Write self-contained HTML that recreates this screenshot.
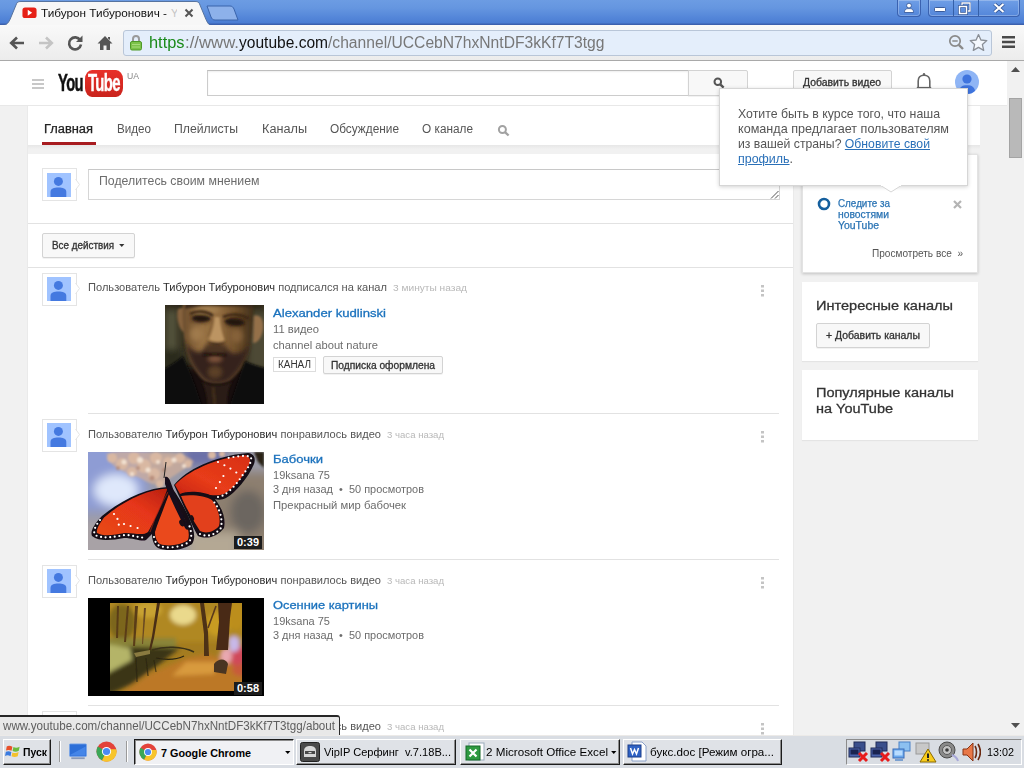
<!DOCTYPE html>
<html lang="ru"><head>
<meta charset="utf-8">
<title>Тибурон Тибуронович - YouTube</title>
<style>
*{box-sizing:border-box;margin:0;padding:0}
html,body{width:1024px;height:768px;overflow:hidden;background:#f1f1f1;font-family:"Liberation Sans",sans-serif;font-size:13px;color:#333}
.abs{position:absolute}
#root{position:relative;width:1024px;height:768px;overflow:hidden}
#root>*{position:absolute}
.t{white-space:nowrap;line-height:16px;height:16px;transform-origin:0 50%;display:block}
.blue{color:#167ac6}
.g5{color:#555}.g7{color:#6c6c6c}.gl{color:#b8b8b8}
b.n{font-weight:normal;color:#2c2c2c}
/* ---------- chrome frame ---------- */
#titlebar{left:0;top:0;width:1024px;height:25px;background:linear-gradient(#6c9ce3 0,#6596e0 8px,#5587d9 17px,#4b7dd3 23px,#3b60ae 24px,#3b60ae 25px)}
#tab{left:2px;top:1px;width:210px;height:25px}
#toolbar{left:0;top:25px;width:1024px;height:36px;background:linear-gradient(#f9f9f9,#ececec);border-bottom:1px solid #a9a9a9}
#urlbar{left:123px;top:30px;width:869px;height:26px;background:#e4eefb;border:1px solid #b9c6d8;border-radius:3px}
.u{font-size:16px;line-height:20px;height:20px;color:#777}
#url .g{color:#1a8a1a}#url .d{color:#111}
.wc{top:0;height:17px;border:1px solid #3a62b0;border-top:0;background:linear-gradient(#6f9ee6,#5486da);border-radius:0 0 4px 4px;box-shadow:inset 0 0 0 1px rgba(255,255,255,.25)}
/* ---------- youtube page ---------- */
#masthead{left:0;top:61px;width:1007px;height:45px;background:#fff;border-bottom:1px solid #e8e8e8}
#main{left:28px;top:106px;width:765px;height:630px;background:#fff;box-shadow:-1px 0 0 #eaeaea,1px 0 0 #eaeaea}
.sidebox{left:802px;width:176px;background:#fff;box-shadow:0 1px 2px rgba(0,0,0,.16)}
.hl{height:1px;background:#e2e2e2}
.btn{background:#f8f8f8;border:1px solid #d3d3d3;border-radius:2px;box-shadow:0 1px 0 rgba(0,0,0,.05)}
.av{width:35px;height:33px;background:#fff;border:1px solid #e4e4e4}
.dots{width:3.5px;height:11.5px;left:760.5px}
.dur{background:#1c1c1c;color:#fff;font-weight:bold;font-size:11px;line-height:12px;height:13px;width:28px;text-align:center;left:234px}
/* scrollbar */
#sb{left:1007px;top:61px;width:17px;height:674px;background:#f1f1f1}
#sbthumb{left:1009px;top:98px;width:13px;height:60px;background:#b9b9b9;border:1px solid #a4a4a4}
/* taskbar */
#taskbar{left:0;top:735px;width:1024px;height:33px;background:#d9dde3;border-top:1px solid #eceae8}
.tb{top:739px;height:26px;background:#dfe2e7;border:1px solid;border-color:#fff #1c1c1c #1c1c1c #fff;box-shadow:inset -1px -1px 0 #8c8c8c;font-size:13px;color:#000;white-space:nowrap;overflow:hidden}
.tb.on{background:#f0f1f4;border-color:#1c1c1c #fff #fff #1c1c1c;box-shadow:inset 1px 1px 0 #8c8c8c;font-weight:bold}
.tk{font-size:10.8px;color:#000;line-height:16px;height:16px}
</style>
</head>
<body>
<div id="root">

<!-- ======= CHROME FRAME ======= -->
<div id="titlebar"></div>
<svg id="tab" viewBox="0 0 210 25"><path d="M0 24.5 C4 24.5 6 22.5 8 18.5 L14 4 C15 1 16 .5 19 .5 L193 .5 C196 .5 197 1 198 4 L204 18.5 C206 22.5 207 24.5 210 24.5" fill="#f7f7f7" stroke="#56739f" stroke-width="1"></path><rect x="1" y="24" width="208" height="1" fill="#f8f8f8"></rect></svg>
<svg style="left:206px;top:5px;width:34px;height:16px" viewBox="0 0 34 16"><path d="M1 1 L24 1 C26 1 27 2 28 4 L32 15 L9 15 C7 15 6 14 5 12 Z" fill="#8db1ea" stroke="#3a64ab" stroke-width="1"></path></svg>
<div id="toolbar"></div>
<div id="urlbar"></div>
<!-- favicon -->
<svg style="left:22px;top:7px;width:15px;height:11.5px" viewBox="0 0 17 13"><rect x=".5" y=".5" width="16" height="12" rx="3" fill="#e62117"></rect><path d="M6.5 3.2 L11.5 6.5 L6.5 9.8Z" fill="#fff"></path></svg>
<div class="t" style="left: 41px; top: 4.6px; font-size: 10.8px; color: rgb(17, 17, 17); transform: scaleX(1.0891);">Тибурон Тибуронович -</div>
<div class="t" style="left:171px;top:4.6px;font-size:10.8px;color:#c4c4c4;width:6px;overflow:hidden">Yo</div>
<svg style="left:184px;top:8px;width:10px;height:10px" viewBox="0 0 10 10"><path d="M1.5 1.5 L8.5 8.5 M8.5 1.5 L1.5 8.5" stroke="#555" stroke-width="2"></path></svg>
<!-- nav buttons -->
<svg style="left:8px;top:33.6px;width:18px;height:18px" viewBox="0 0 18 18"><path d="M16 9 H4 M9 3.5 L3.2 9 L9 14.5" fill="none" stroke="#555" stroke-width="2.6"></path></svg>
<svg style="left:37px;top:33.6px;width:18px;height:18px" viewBox="0 0 18 18"><path d="M2 9 H14 M9 3.5 L14.8 9 L9 14.5" fill="none" stroke="#c4c4c4" stroke-width="2.6"></path></svg>
<svg style="left:66px;top:33.6px;width:18px;height:18px" viewBox="0 0 18 18"><path d="M14.2 6.2 A6 6 0 1 0 15 10.5" fill="none" stroke="#555" stroke-width="2.6"></path><path d="M16.5 1.5 V8 H10 Z" fill="#555"></path></svg>
<svg style="left:96px;top:33.6px;width:18px;height:18px" viewBox="0 0 18 18"><path d="M9 2 L1.5 9.5 H4 V16 H7.5 V11.5 H10.5 V16 H14 V9.5 H16.5 Z M12 3 H14 V6 L12 4.5Z" fill="#555"></path></svg>
<!-- lock -->
<svg style="left:129px;top:34px;width:14px;height:17px" viewBox="0 0 14 17"><path d="M4 8 V5 A3 3 0 0 1 10 5 V8" fill="none" stroke="#9a9a9a" stroke-width="2"></path><rect x="1.5" y="7.5" width="11" height="8.5" rx="1.5" fill="#7cc24a" stroke="#4e9a28"></rect><path d="M3 10.5 H11 M3 13 H11" stroke="#a7dc7c" stroke-width="1"></path></svg>
<div class="t u" style="left: 149px; top: 33px; color: rgb(26, 138, 26); transform: scaleX(1.0234);">https</div><div class="t u" style="left: 184.5px; top: 33px; transform: scaleX(1.0473);">://www.</div><div class="t u" style="left: 238.5px; top: 33px; color: rgb(17, 17, 17); transform: scaleX(0.9715);">youtube.com</div><div class="t u" style="left: 327.5px; top: 33px; transform: scaleX(0.9777);">/channel/UCCebN7hxNntDF3kKf7T3tgg</div>
<!-- zoom, star, menu -->
<svg style="left:948px;top:34px;width:17px;height:17px" viewBox="0 0 17 17"><circle cx="7" cy="7" r="5.2" fill="none" stroke="#8a8a8a" stroke-width="1.7"></circle><path d="M4.3 7 H9.7" stroke="#8a8a8a" stroke-width="1.5"></path><path d="M10.8 10.8 L15 15" stroke="#8a8a8a" stroke-width="2.4"></path></svg>
<svg style="left:969px;top:33px;width:19px;height:19px" viewBox="0 0 19 19"><path d="M9.5 1.6 L11.9 7 L17.8 7.6 L13.4 11.6 L14.7 17.4 L9.5 14.4 L4.3 17.4 L5.6 11.6 L1.2 7.6 L7.1 7 Z" fill="#f4f8fd" stroke="#8a8f96" stroke-width="1.3" stroke-linejoin="round"></path></svg>
<svg style="left:1002px;top:35px;width:14px;height:14px" viewBox="0 0 14 14"><path d="M0 2.2 H13 M0 7 H13 M0 11.8 H13" stroke="#4a4a4a" stroke-width="2.6"></path></svg>
<!-- window controls -->
<div class="wc" style="left:897px;width:24px"></div>
<div class="wc" style="left:928px;width:92px"></div>
<div style="left:953px;top:0;width:1px;height:16px;background:#3560a8"></div>
<div style="left:978px;top:0;width:1px;height:16px;background:#3560a8"></div>
<svg style="left:903px;top:2px;width:12px;height:12px" viewBox="0 0 12 12"><circle cx="6" cy="3.6" r="2.4" fill="#fff" stroke="#2c4f90" stroke-width=".8"></circle><path d="M1.5 10.5 C1.5 7 3.5 6.6 6 6.6 C8.5 6.6 10.5 7 10.5 10.5 Z" fill="#fff" stroke="#2c4f90" stroke-width=".8"></path></svg>
<svg style="left:934px;top:7px;width:13px;height:6px" viewBox="0 0 13 6"><rect x=".5" y=".5" width="11" height="4" rx="1" fill="#fff" stroke="#2c4f90" stroke-width=".9"></rect></svg>
<svg style="left:958px;top:2px;width:13px;height:13px" viewBox="0 0 13 13"><path d="M4 3.5 V1 H12 V9 H9.5" fill="none" stroke="#2c4f90" stroke-width="2.6"></path><path d="M4 3.5 V1 H12 V9 H9.5" fill="none" stroke="#fff" stroke-width="1.3"></path><rect x="1.5" y="4.5" width="7" height="7" fill="none" stroke="#2c4f90" stroke-width="2.8"></rect><rect x="1.5" y="4.5" width="7" height="7" fill="none" stroke="#fff" stroke-width="1.5"></rect></svg>
<svg style="left:993px;top:3px;width:12px;height:10px" viewBox="0 0 12 10"><path d="M1.5 1 L10.5 9 M10.5 1 L1.5 9" stroke="#2c4f90" stroke-width="3.6"></path><path d="M1.5 1 L10.5 9 M10.5 1 L1.5 9" stroke="#fff" stroke-width="2.2"></path></svg>

<!-- ======= PAGE ======= -->
<div id="masthead"></div>
<div id="main"></div>
<!-- hamburger -->
<svg style="left:32px;top:79px;width:12px;height:10px" viewBox="0 0 12 10"><path d="M0 1 H12 M0 5 H12 M0 9 H12" stroke="#c8c8c8" stroke-width="2"></path></svg>
<!-- YouTube logo -->
<div class="t" style="left: 58px; top: 68px; font-size: 24px; line-height: 30px; height: 30px; font-weight: bold; color: rgb(17, 17, 17); letter-spacing: -1px; -webkit-text-stroke: 0.5px rgb(17, 17, 17); transform: scaleX(0.6166);">You</div>
<div style="left:85px;top:70px;width:38px;height:27px;background:linear-gradient(#e8312a,#c9231c);border-radius:7px/9px"></div>
<div class="t" style="left: 88px; top: 68px; font-size: 24px; line-height: 30px; height: 30px; font-weight: bold; color: rgb(255, 255, 255); letter-spacing: -1px; -webkit-text-stroke: 0.4px rgb(255, 255, 255); transform: scaleX(0.6208);">Tube</div>
<div class="t" style="left: 127px; top: 69px; font-size: 9px; line-height: 14px; height: 14px; color: rgb(136, 136, 136); transform: scaleX(0.9588);">UA</div>
<!-- search -->
<div style="left:207px;top:70px;width:482px;height:26px;background:#fff;border:1px solid #ccc;border-top-color:#bdbdbd;box-shadow:inset 0 1px 2px #eee"></div>
<div class="btn" style="left:688px;top:70px;width:60px;height:26px;border-radius:0 2px 2px 0"></div>
<svg style="left:713px;top:77px;width:12px;height:12px" viewBox="0 0 12 12"><circle cx="4.8" cy="4.8" r="3.3" fill="none" stroke="#555" stroke-width="2"></circle><path d="M7.3 7.3 L10.6 10.6" stroke="#555" stroke-width="2.4"></path></svg>
<div class="btn" style="left:793px;top:70px;width:99px;height:26px"></div>
<div class="t" style="left: 803px; top: 75px; font-size: 10px; -webkit-text-stroke: 0.3px rgb(51, 51, 51); color: rgb(51, 51, 51); transform: scaleX(1.0422);">Добавить видео</div>
<!-- bell -->
<svg style="left:915px;top:72px;width:18px;height:19px" viewBox="0 0 18 19"><path d="M3.2 15.5 V9 C3.2 5 5.5 3.2 9 3.2 C12.5 3.2 14.8 5 14.8 9 V15.5" fill="none" stroke="#666" stroke-width="1.6"></path><path d="M1.8 15.8 H16.2" stroke="#666" stroke-width="1.8"></path><circle cx="9" cy="2.3" r="1.2" fill="#666"></circle></svg>
<!-- account avatar -->
<svg style="left:955px;top:70px;width:24px;height:24px" viewBox="0 0 24 24"><defs><clipPath id="cav"><circle cx="12" cy="12" r="12"></circle></clipPath></defs><g clip-path="url(#cav)"><rect width="24" height="24" fill="#8fb5f5"></rect><circle cx="12" cy="9" r="4.6" fill="#3f74de"></circle><path d="M3.5 25 C3.5 17 7 15.3 12 15.3 C17 15.3 20.5 17 20.5 25Z" fill="#3f74de"></path></g></svg>

<!-- tabs -->
<div class="t" style="left: 44px; top: 121px; font-size: 12px; -webkit-text-stroke: 0.25px rgb(34, 34, 34); color: rgb(34, 34, 34); transform: scaleX(1.0725);">Главная</div>
<div style="left:42px;top:142px;width:54px;height:3px;background:#a81c20"></div>
<div class="t g5" style="left: 117px; top: 121px; font-size: 12px; transform: scaleX(0.9697);">Видео</div>
<div class="t g5" style="left: 174px; top: 121px; font-size: 12px; transform: scaleX(1.0184);">Плейлисты</div>
<div class="t g5" style="left: 262px; top: 121px; font-size: 12px; transform: scaleX(1.0565);">Каналы</div>
<div class="t g5" style="left: 330px; top: 121px; font-size: 12px; transform: scaleX(0.9868);">Обсуждение</div>
<div class="t g5" style="left: 422px; top: 121px; font-size: 12px; transform: scaleX(0.9837);">О канале</div>
<svg style="left:497px;top:125px;width:13px;height:12px" viewBox="0 0 13 12"><circle cx="5.4" cy="4.5" r="3.5" fill="none" stroke="#a2a2a2" stroke-width="2"></circle><path d="M8 7.1 L11.6 10.5" stroke="#a2a2a2" stroke-width="2.3"></path></svg>
<div style="left:793px;top:106px;width:187px;height:39px;background:#fff"></div>
<div style="left:28px;top:145px;width:952px;height:9px;background:linear-gradient(#e7e7e7,#f1f1f1 4px,#f1f1f1)"></div>

<!-- comment box -->
<div class="av" style="left:42px;top:168px"></div>
<svg style="left:47px;top:173px;width:24px;height:24px" viewBox="0 0 24 24"><rect width="24" height="24" fill="#a0c3ff"></rect><circle cx="11.4" cy="8.4" r="4.5" fill="#4479e0"></circle><path d="M3.5 24 V19 C3.5 15.5 7 14.6 11.4 14.6 C15.8 14.6 19.3 15.5 19.3 19 V24Z" fill="#4479e0"></path></svg>
<svg style="left:75px;top:179px;width:6px;height:11px" viewBox="0 0 6 11"><path d="M.5 0 L4.5 5.5 L.5 11" fill="#fff" stroke="#e4e4e4"></path></svg>
<div style="left:88px;top:169px;width:692px;height:31px;background:#fff;border:1px solid #d6d6d6;border-top-color:#c8c8c8"></div>
<svg style="left:769px;top:189px;width:10px;height:10px" viewBox="0 0 10 10"><path d="M9.5 2 L2 9.5 M9.5 6 L6 9.5" stroke="#555" stroke-width="1"></path></svg>
<div class="t g7" style="left: 98.5px; top: 173px; font-size: 12.2px; transform: scaleX(1.0088);">Поделитесь своим мнением</div>
<div class="hl" style="left:28px;top:223px;width:765px"></div>
<div class="btn" style="left:42px;top:233px;width:93px;height:25px"></div>
<div class="t" style="left: 52px; top: 238px; font-size: 10px; -webkit-text-stroke: 0.3px rgb(51, 51, 51); color: rgb(51, 51, 51); transform: scaleX(0.9858);">Все действия</div>
<svg style="left:119px;top:243.5px;width:5.5px;height:3px" viewBox="0 0 7 4"><path d="M0 0 H7 L3.5 4Z" fill="#333"></path></svg>
<div class="hl" style="left:28px;top:267px;width:765px"></div>

<!-- ===== feed item 1 ===== -->
<div class="av" style="left:42px;top:273px"></div>
<svg style="left:47px;top:277px;width:24px;height:24px" viewBox="0 0 24 24"><rect width="24" height="24" fill="#a0c3ff"></rect><circle cx="11.4" cy="8.4" r="4.5" fill="#4479e0"></circle><path d="M3.5 24 V19 C3.5 15.5 7 14.6 11.4 14.6 C15.8 14.6 19.3 15.5 19.3 19 V24Z" fill="#4479e0"></path></svg>
<svg style="left:75px;top:283px;width:6px;height:11px" viewBox="0 0 6 11"><path d="M.5 0 L4.5 5.5 L.5 11" fill="#fff" stroke="#e4e4e4"></path></svg>
<div class="t g5" style="left: 88px; top: 279px; font-size: 10.8px; transform: scaleX(1.0271);">Пользователь <b class="n">Тибурон Тибуронович</b> подписался на канал</div>
<div class="t gl" style="left: 393px; top: 279.5px; font-size: 9.5px; transform: scaleX(1.0696);">3 минуты назад</div>
<svg class="dots" style="top:285px" viewBox="0 0 3.5 11.5"><rect width="3.5" height="2.5" fill="#c4c4c4"></rect><rect y="4.5" width="3.5" height="2.5" fill="#c4c4c4"></rect><rect y="9" width="3.5" height="2.5" fill="#c4c4c4"></rect></svg>
<svg style="left:165px;top:305px;width:99px;height:99px" viewBox="0 0 99 99"><defs>
<filter id="b1" x="-20%" y="-20%" width="140%" height="140%"><feGaussianBlur stdDeviation="1.3"></feGaussianBlur></filter>
<filter id="b1s" x="-20%" y="-20%" width="140%" height="140%"><feGaussianBlur stdDeviation="3"></feGaussianBlur></filter>
<filter id="b1m" x="-20%" y="-20%" width="140%" height="140%"><feGaussianBlur stdDeviation="2.2"></feGaussianBlur></filter>
<linearGradient id="sk" x1="0" y1="0" x2="1" y2="0"><stop offset="0" stop-color="#6c4e2e"></stop><stop offset=".28" stop-color="#987244"></stop><stop offset=".55" stop-color="#8e683c"></stop><stop offset=".8" stop-color="#684a28"></stop><stop offset="1" stop-color="#40301c"></stop></linearGradient>
<clipPath id="c1"><rect width="99" height="99"></rect></clipPath></defs>
<g clip-path="url(#c1)">
<rect width="99" height="99" fill="#3a3624"></rect>
<g filter="url(#b1s)"><rect x="84" y="8" width="24" height="56" fill="#4e4a34"></rect><rect x="2" y="6" width="9" height="44" fill="#55553c"></rect><rect x="0" y="-4" width="99" height="7" fill="#2a2416"></rect><rect x="-4" y="44" width="22" height="22" fill="#2c2a1c"></rect><rect x="10" y="62" width="80" height="44" fill="#120e0a"></rect></g>
<g filter="url(#b1)">
<path d="M13 4 C11 10 13 22 18 27 L21 26 L20 2Z" fill="#86623e"></path>
<path d="M89 11 C95 9 99 14 98 24 C97 32 93 38 88 38Z" fill="#94704a"></path>
<path d="M18 -4 C17 14 18 30 21 42 C24 56 30 66 38 74 C44 79 60 79 66 74 C76 66 82 54 85 40 C88 26 89 10 88 -4Z" fill="url(#sk)"></path>
<path d="M20 -2 L88 -2 L88 3 C70 1 40 1 20 4Z" fill="#3a2a1a"></path>
</g>
<g filter="url(#b1m)">
<ellipse cx="42" cy="5" rx="13" ry="4" fill="#a88456" opacity=".7"></ellipse><ellipse cx="36" cy="13.5" rx="10" ry="4.5" fill="#2e1c10" opacity=".8"></ellipse><ellipse cx="70" cy="17" rx="10" ry="4.5" fill="#2a1a0e" opacity=".85"></ellipse>
<ellipse cx="31" cy="29" rx="6" ry="7" fill="#a88252" opacity=".7"></ellipse>
<ellipse cx="72" cy="31" rx="6" ry="7" fill="#8e6a40" opacity=".7"></ellipse>
<path d="M20 34 C22 50 28 64 38 74 C44 80 60 80 66 74 C76 64 82 52 85 38 C80 46 74 50 66 48 C62 42 56 40 50 40 C44 40 40 42 36 47 C28 48 23 42 20 34Z" fill="#34241a"></path>
<path d="M40 40 C46 37 56 37 62 41 C62 46 60 49 50 49 C42 49 39 46 40 40Z" fill="#4e3624"></path>
<ellipse cx="50" cy="67" rx="7" ry="6" fill="#60432a" opacity=".9"></ellipse>
<ellipse cx="50" cy="54" rx="7" ry="2.6" fill="#8a5c40"></ellipse>
</g>
<g filter="url(#b1)">
<path d="M38 50 C44 49 56 49 61 50.5" stroke="#1c100a" stroke-width="1.8" fill="none"></path>
<path d="M27 13 C31 10 41 10 46 14 C41 17 31 17 27 13Z" fill="#22160c"></path>
<path d="M59 16 C64 13 75 14 80 18 C75 21 64 21 59 16Z" fill="#22160c"></path>
<path d="M25 9 C32 5 42 6 48 11" stroke="#3c2816" stroke-width="2.6" fill="none"></path>
<path d="M58 12 C66 8 77 9 84 14" stroke="#3c2816" stroke-width="2.6" fill="none"></path>
<path d="M49.5 12 C49.5 20 47 28 44 34 C47 37.5 56 37.5 59.5 35 C57 28 55 20 54.5 12Z" fill="#bc9462"></path>
<path d="M42 36 C47 39 57 39 61 36 C58 41 45 41 42 36Z" fill="#3e2818"></path>
<path d="M48 12 C47 20 45 27 43 32" stroke="#7a5834" stroke-width="1.4" fill="none" opacity=".8"></path>
<path d="M36 76 C40 82 42 90 43 104 L62 104 C62 90 63 82 68 76 C60 82 44 82 36 76Z" fill="#2c1e12"></path>
<path d="M48 82 L50 100" stroke="#4a3420" stroke-width="2.5" opacity=".7"></path>
</g>
<g filter="url(#b1)"><path d="M-5 66 C6 60 12 56 18 51 C24 64 30 78 38 104 L-5 104Z" fill="#0a0a09"></path><path d="M104 64 C96 62 88 60 80 56 C76 68 70 84 64 104 L104 104Z" fill="#0c0c0b"></path></g>
</g></svg>
<div class="t" style="left: 273px; top: 305px; font-size: 11.5px; color: rgb(27, 114, 189); -webkit-text-stroke: 0.3px rgb(27, 114, 189); transform: scaleX(1.1403);">Alexander kudlinski</div>
<div class="t g7" style="left: 273px; top: 321px; font-size: 10.8px; transform: scaleX(1.0384);">11 видео</div>
<div class="t g7" style="left: 273px; top: 337px; font-size: 10.8px; transform: scaleX(1.035);">channel about nature</div>
<div style="left:273px;top:357px;width:43px;height:15px;background:#fff;border:1px solid #ddd"></div>
<div class="t" style="left: 278px; top: 356.5px; font-size: 10px; color: rgb(51, 51, 51); transform: scaleX(0.9948);">КАНАЛ</div>
<div class="btn" style="left:323px;top:356px;width:120px;height:18px"></div>
<div class="t" style="left: 331px; top: 358px; font-size: 10px; -webkit-text-stroke: 0.3px rgb(51, 51, 51); color: rgb(51, 51, 51); transform: scaleX(1.0238);">Подписка оформлена</div>
<div class="hl" style="left:88px;top:413px;width:691px"></div>

<!-- ===== feed item 2 ===== -->
<div class="av" style="left:42px;top:419px"></div>
<svg style="left:47px;top:423px;width:24px;height:24px" viewBox="0 0 24 24"><rect width="24" height="24" fill="#a0c3ff"></rect><circle cx="11.4" cy="8.4" r="4.5" fill="#4479e0"></circle><path d="M3.5 24 V19 C3.5 15.5 7 14.6 11.4 14.6 C15.8 14.6 19.3 15.5 19.3 19 V24Z" fill="#4479e0"></path></svg>
<svg style="left:75px;top:429px;width:6px;height:11px" viewBox="0 0 6 11"><path d="M.5 0 L4.5 5.5 L.5 11" fill="#fff" stroke="#e4e4e4"></path></svg>
<div class="t g5" style="left: 88px; top: 426px; font-size: 10.8px; transform: scaleX(1.0253);">Пользователю <b class="n">Тибурон Тибуронович</b> понравилось видео</div>
<div class="t gl" style="left: 387px; top: 426.5px; font-size: 9.5px; transform: scaleX(1.01);">3 часа назад</div>
<svg class="dots" style="top:431px" viewBox="0 0 3.5 11.5"><rect width="3.5" height="2.5" fill="#c4c4c4"></rect><rect y="4.5" width="3.5" height="2.5" fill="#c4c4c4"></rect><rect y="9" width="3.5" height="2.5" fill="#c4c4c4"></rect></svg>
<svg style="left:88px;top:452px;width:176px;height:98px" viewBox="0 0 176 98"><defs>
<filter id="b2" x="-20%" y="-20%" width="140%" height="140%"><feGaussianBlur stdDeviation="5"></feGaussianBlur></filter>
<filter id="b2s" x="-20%" y="-20%" width="140%" height="140%"><feGaussianBlur stdDeviation="1.2"></feGaussianBlur></filter>
<filter id="b2t" x="-10%" y="-10%" width="120%" height="120%"><feGaussianBlur stdDeviation=".5"></feGaussianBlur></filter>
<linearGradient id="wl" x1="0" y1="1" x2="1" y2="0"><stop offset="0" stop-color="#e84a18"></stop><stop offset=".6" stop-color="#e6361a"></stop><stop offset="1" stop-color="#b8200e"></stop></linearGradient>
<linearGradient id="wr" x1="0" y1="1" x2="1" y2="0"><stop offset="0" stop-color="#c8240e"></stop><stop offset=".4" stop-color="#e83c1a"></stop><stop offset="1" stop-color="#d83014"></stop></linearGradient>
<clipPath id="c2"><rect width="176" height="98"></rect></clipPath></defs>
<g clip-path="url(#c2)">
<rect width="176" height="98" fill="#9a9aa8"></rect>
<g filter="url(#b2)">
<rect x="-10" y="-10" width="70" height="70" fill="#8e9cd4"></rect>
<ellipse cx="28" cy="38" rx="22" ry="16" fill="#dfe8fb"></ellipse>
<rect x="-10" y="70" width="90" height="40" fill="#a8a2a6"></rect>
<rect x="120" y="20" width="70" height="90" fill="#8d7f70"></rect>
<ellipse cx="160" cy="60" rx="18" ry="22" fill="#6c6660"></ellipse>
<rect x="100" y="80" width="50" height="30" fill="#b4a894"></rect>
<rect x="96" y="-6" width="40" height="20" fill="#6a70a8"></rect>
</g>
<g filter="url(#b2s)">
<path d="M18 2 C30 -2 50 0 70 1 C90 0 102 4 106 10 C96 18 88 22 80 28 C72 36 62 32 52 26 C42 22 30 18 24 12Z" fill="#cfae9a" opacity=".75"></path><g fill="#d9b8a2"><circle cx="24" cy="6" r="5"></circle><circle cx="34" cy="12" r="6"></circle><circle cx="46" cy="6" r="6"></circle><circle cx="56" cy="14" r="7"></circle><circle cx="68" cy="6" r="6"></circle><circle cx="44" cy="20" r="5"></circle><circle cx="66" cy="22" r="6"></circle><circle cx="80" cy="10" r="5"></circle><circle cx="92" cy="6" r="5"></circle><circle cx="100" cy="12" r="4"></circle><circle cx="72" cy="32" r="4"></circle><circle cx="124" cy="3" r="4"></circle><circle cx="134" cy="2" r="3"></circle></g>
<g fill="#f2e2d2"><circle cx="36" cy="10" r="2.5"></circle><circle cx="52" cy="8" r="3"></circle><circle cx="60" cy="18" r="2.5"></circle><circle cx="86" cy="8" r="2.5"></circle><circle cx="96" cy="14" r="2"></circle><circle cx="44" cy="22" r="2"></circle><circle cx="70" cy="10" r="2"></circle></g>
<g fill="#b88e7c"><circle cx="50" cy="16" r="2"></circle><circle cx="64" cy="26" r="2.5"></circle><circle cx="76" cy="18" r="2"></circle><circle cx="30" cy="16" r="2"></circle></g>
<path d="M166 0 L176 0 L176 16 L170 10Z" fill="#2a2018"></path>
</g>
<g filter="url(#b2t)">
<path d="M78 10 L76 26" stroke="#222" stroke-width="1"></path>
<!-- right wing -->
<path d="M86 33 C98 18 126 4 160 1 C166 2 168 6 166 12 C160 26 148 40 138 46 C134 48 130 48 127 47 C134 56 138 66 136 76 C130 84 120 88 110 84 C104 74 96 54 90 42Z" fill="#120c14"></path>
<path d="M87 33 C99 19.5 127 5.8 158 3.2 C162 5 163 9 161 13 C155 25 145 37 136 42 C130 44 126 43 122 43 C116 40 100 38 92 42Z" fill="url(#wr)"></path>
<path d="M93 44 C104 42 118 44 124 48 C130 56 133 66 131 74 C126 80 118 82 112 79 C106 70 98 56 93 44Z" fill="#e2401a"></path>
<!-- left wing -->
<path d="M80 35 C60 36 36 46 14 64 C6 72 2 80 4 84 C12 90 24 88 36 86 C46 86 54 90 58 88 C60 86 62 84 64 82 C64 88 66 94 70 96 C80 100 96 98 104 92 C108 86 106 78 102 68 C98 58 90 44 84 36Z" fill="#120c14"></path>
<path d="M79 36.6 C60 37.8 37 47.8 16 65.4 C11 72 8 78 9 81 C16 85 26 83 37 81 C47 81 55 84 60 80 C66 70 74 52 79 38Z" fill="url(#wl)"></path>
<path d="M81 42 C76 56 70 70 67 80 C67 86 69 90 72 92 C80 95 93 93 100 88 C102 82 100 76 97 68 C93 58 87 48 81 42Z" fill="#ea4a1c"></path>
<path d="M80 40 C72 54 66 68 62 80" stroke="#b82a10" stroke-width="1.2" fill="none" opacity=".6"></path>
<!-- body -->
<path d="M77 25 C79 24 81.5 26 82.5 30 C87 42 95 62 101 77 C99 79 97.5 77 96 74 C89 60 81 44 77 32Z" fill="#16101a"></path>
<ellipse cx="94" cy="71" rx="2.6" ry="3.6" fill="#1a1014" transform="rotate(-25 94 71)"></ellipse>
<ellipse cx="104" cy="66" rx="1.8" ry="3" fill="#1a1014" transform="rotate(-25 104 66)"></ellipse>
</g>
<!-- white dots -->
<g fill="none" stroke="#fff" stroke-linecap="round" stroke-width="2.2">
<path d="M12 68 C7 74 5 80 7 83 C14 87 26 85 37 83 C46 83 54 87 58 85" stroke-dasharray="0 4.6"></path>
<path d="M66 85 C67 90 69 93 72 94 C80 97 94 95 101 90 C105 85 103 78 100 70" stroke-dasharray="0 4.8"></path>
<path d="M112 82 C120 86 128 82 133 76 C135 66 131 56 126 50" stroke-dasharray="0 4.6"></path>
<path d="M130 45 C136 45 146 36 154 24 C160 16 164 10 163 5 C158 3 150 4 140 6" stroke-dasharray="0 4.8"></path>
<path d="M26 62 C30 66 32 72 30 76" stroke-dasharray="0 6"></path>
<path d="M36 72 C42 74 50 76 56 78" stroke-dasharray="0 7"></path>
<path d="M130 10 C138 14 146 18 150 22" stroke-dasharray="0 7"></path>
<path d="M128 36 C132 30 136 24 138 18" stroke-dasharray="0 7"></path>
</g>
</g></svg>
<div class="dur" style="top:536px">0:39</div>
<div class="t" style="left: 273px; top: 451px; font-size: 11.5px; color: rgb(27, 114, 189); -webkit-text-stroke: 0.3px rgb(27, 114, 189); transform: scaleX(1.1331);">Бабочки</div>
<div class="t g7" style="left: 273px; top: 467px; font-size: 10.8px; transform: scaleX(1.0207);">19ksana 75</div>
<div class="t g7" style="left: 273px; top: 481px; font-size: 10.8px; transform: scaleX(1.0125);">3 дня назад &nbsp;•&nbsp; 50 просмотров</div>
<div class="t g7" style="left: 273px; top: 497px; font-size: 10.8px; transform: scaleX(1.0443);">Прекрасный мир бабочек</div>
<div class="hl" style="left:88px;top:559px;width:691px"></div>

<!-- ===== feed item 3 ===== -->
<div class="av" style="left:42px;top:565px"></div>
<svg style="left:47px;top:569px;width:24px;height:24px" viewBox="0 0 24 24"><rect width="24" height="24" fill="#a0c3ff"></rect><circle cx="11.4" cy="8.4" r="4.5" fill="#4479e0"></circle><path d="M3.5 24 V19 C3.5 15.5 7 14.6 11.4 14.6 C15.8 14.6 19.3 15.5 19.3 19 V24Z" fill="#4479e0"></path></svg>
<svg style="left:75px;top:575px;width:6px;height:11px" viewBox="0 0 6 11"><path d="M.5 0 L4.5 5.5 L.5 11" fill="#fff" stroke="#e4e4e4"></path></svg>
<div class="t g5" style="left: 88px; top: 572px; font-size: 10.8px; transform: scaleX(1.0253);">Пользователю <b class="n">Тибурон Тибуронович</b> понравилось видео</div>
<div class="t gl" style="left: 387px; top: 572.5px; font-size: 9.5px; transform: scaleX(1.01);">3 часа назад</div>
<svg class="dots" style="top:577px" viewBox="0 0 3.5 11.5"><rect width="3.5" height="2.5" fill="#c4c4c4"></rect><rect y="4.5" width="3.5" height="2.5" fill="#c4c4c4"></rect><rect y="9" width="3.5" height="2.5" fill="#c4c4c4"></rect></svg>
<svg style="left:88px;top:598px;width:176px;height:98px" viewBox="0 0 176 98"><defs>
<filter id="b3" x="-20%" y="-20%" width="140%" height="140%"><feGaussianBlur stdDeviation="2.2"></feGaussianBlur></filter>
<filter id="b3s" x="-10%" y="-10%" width="120%" height="120%"><feGaussianBlur stdDeviation=".7"></feGaussianBlur></filter>
<clipPath id="c3"><rect x="22" y="5" width="132" height="88"></rect></clipPath></defs>
<rect width="176" height="98" fill="#000"></rect>
<g clip-path="url(#c3)">
<rect x="22" y="5" width="132" height="88" fill="#a47c20"></rect>
<g filter="url(#b3)">
<rect x="18" y="0" width="140" height="44" fill="#b08822"></rect>
<ellipse cx="95" cy="17" rx="13" ry="10" fill="#ead98c"></ellipse>
<ellipse cx="60" cy="12" rx="14" ry="8" fill="#c8a232"></ellipse>
<ellipse cx="130" cy="26" rx="12" ry="12" fill="#c89c24"></ellipse>
<ellipse cx="148" cy="18" rx="9" ry="14" fill="#bc8e1e"></ellipse>
<ellipse cx="34" cy="24" rx="14" ry="18" fill="#7c661a"></ellipse>
<rect x="18" y="40" width="70" height="10" fill="#8a8438"></rect>
<path d="M18 48 L92 50 L74 64 L44 86 L18 98Z" fill="#3a3416"></path>
<path d="M18 46 L42 50 L44 62 L18 76Z" fill="#b4b468"></path>
<path d="M120 56 L132 60 L160 70 L160 98 L30 98 L62 76 L98 60Z" fill="#bc7826"></path>
<path d="M98 64 L130 64 L126 76 L84 78Z" fill="#d89a3c"></path>
<ellipse cx="150" cy="58" rx="8" ry="12" fill="#d04a5a"></ellipse>
<ellipse cx="146" cy="46" rx="6" ry="8" fill="#c8b8e8"></ellipse>
<ellipse cx="138" cy="58" rx="6" ry="8" fill="#e8a8b0"></ellipse>
<ellipse cx="152" cy="72" rx="8" ry="6" fill="#c85a3a"></ellipse>
</g>
<g filter="url(#b3s)">
<path d="M130 5 L144 5 L142 20 L140 52 L128 52 L131 24Z" fill="#4a2c14"></path>
<path d="M112 5 L116 5 L120 34 L121 58 L116 58 L116 36Z" fill="#4e3018"></path>
<path d="M120 30 L128 8" stroke="#5a3a1c" stroke-width="1.6"></path>
<path d="M69 5 L72 5 L66 40 L63 52 L61 52 L64 38Z" fill="#4a2e14"></path>
<path d="M47 8 L50 8 L47 48 L45 48Z" fill="#5a3c18"></path>
<path d="M39 8 L41 8 L38 44 L36 44Z" fill="#5a3c18"></path>
<path d="M29 8 L31 8 L30 40 L28 40Z" fill="#5a3c18"></path>
<path d="M56 10 L58 10 L55 46 L54 46Z" fill="#6a4a20"></path>
<path d="M64 52 C76 48 94 48 106 54" stroke="#3a3018" stroke-width="1.6" fill="none"></path>
<path d="M46 55 L62 52 L62 56 L48 59Z" fill="#8a7a40"></path>
<path d="M68 60 C78 62 88 62 96 58" stroke="#2a2410" stroke-width="1.2" fill="none"></path>
<path d="M48 60 L49 84 M58 60 L60 78 M66 62 L68 74" stroke="#2a2410" stroke-width="1.3" opacity=".7"></path>
<path d="M126 66 C130 60 138 60 140 66 L138 76 L126 74Z" fill="#4a3420"></path>
</g>
</g></svg>
<div class="dur" style="top:682px">0:58</div>
<div class="t" style="left: 273px; top: 597px; font-size: 11.5px; color: rgb(27, 114, 189); -webkit-text-stroke: 0.3px rgb(27, 114, 189); transform: scaleX(1.1178);">Осенние картины</div>
<div class="t g7" style="left: 273px; top: 613px; font-size: 10.8px; transform: scaleX(1.0207);">19ksana 75</div>
<div class="t g7" style="left: 273px; top: 627px; font-size: 10.8px; transform: scaleX(1.0125);">3 дня назад &nbsp;•&nbsp; 50 просмотров</div>
<div class="hl" style="left:88px;top:705px;width:691px"></div>

<!-- ===== feed item 4 (partially hidden) ===== -->
<div class="av" style="left:42px;top:711px"></div>
<svg style="left:47px;top:715px;width:24px;height:24px" viewBox="0 0 24 24"><rect width="24" height="24" fill="#a0c3ff"></rect><circle cx="11.4" cy="8.4" r="4.5" fill="#4479e0"></circle></svg>
<div class="t g5" style="left: 88px; top: 718px; font-size: 10.8px; transform: scaleX(1.0253);">Пользователю <b class="n">Тибурон Тибуронович</b> понравилось видео</div>
<div class="t gl" style="left: 387px; top: 718.5px; font-size: 9.5px; transform: scaleX(1.01);">3 часа назад</div>
<svg class="dots" style="top:723px" viewBox="0 0 3.5 11.5"><rect width="3.5" height="2.5" fill="#c4c4c4"></rect><rect y="4.5" width="3.5" height="2.5" fill="#c4c4c4"></rect><rect y="9" width="3.5" height="2.5" fill="#c4c4c4"></rect></svg>

<!-- ===== sidebar ===== -->
<div class="sidebox" style="top:154px;height:119px;border:1px solid #e3e3e3;box-shadow:0 1px 3px rgba(0,0,0,.2)"></div>
<svg style="left:817px;top:197px;width:14px;height:14px" viewBox="0 0 14 14"><circle cx="7" cy="7" r="5" fill="#fff" stroke="#155f9e" stroke-width="2.6"></circle></svg>
<div class="t" style="left: 838px; top: 196px; font-size: 10px; color: rgb(43, 116, 180); -webkit-text-stroke: 0.25px rgb(43, 116, 180); transform: scaleX(0.9852);">Следите за</div>
<div class="t" style="left: 838px; top: 207px; font-size: 10px; color: rgb(43, 116, 180); -webkit-text-stroke: 0.25px rgb(43, 116, 180); transform: scaleX(1.0342);">новостями</div>
<div class="t" style="left: 838px; top: 218px; font-size: 10px; color: rgb(43, 116, 180); -webkit-text-stroke: 0.25px rgb(43, 116, 180); transform: scaleX(1.0433);">YouTube</div>
<svg style="left:953px;top:200px;width:9px;height:9px" viewBox="0 0 9 9"><path d="M1 1 L8 8 M8 1 L1 8" stroke="#b4b4b4" stroke-width="2.2"></path></svg>
<div class="t g5" style="left: 872px; top: 246px; font-size: 10px; transform: scaleX(1.0071);">Просмотреть все &nbsp;»</div>

<div class="sidebox" style="top:282px;height:79px;box-shadow:0 1px 1px rgba(0,0,0,.05)"></div>
<div class="t" style="left: 816px; top: 297px; font-size: 13.7px; line-height: 18px; height: 18px; color: rgb(51, 51, 51); -webkit-text-stroke: 0.3px rgb(51, 51, 51); transform: scaleX(1.0628);">Интересные каналы</div>
<div class="btn" style="left:816px;top:323px;width:114px;height:25px"></div>
<div class="t" style="left: 826px; top: 328px; font-size: 10px; -webkit-text-stroke: 0.3px rgb(51, 51, 51); color: rgb(51, 51, 51); transform: scaleX(1.0461);">+ Добавить каналы</div>

<div class="sidebox" style="top:370px;height:70px;box-shadow:0 1px 1px rgba(0,0,0,.05)"></div>
<div class="t" style="left: 816px; top: 384px; font-size: 13.7px; line-height: 18px; height: 18px; color: rgb(51, 51, 51); -webkit-text-stroke: 0.3px rgb(51, 51, 51); transform: scaleX(1.0605);">Популярные каналы</div>
<div class="t" style="left: 816px; top: 400px; font-size: 13.7px; line-height: 18px; height: 18px; color: rgb(51, 51, 51); -webkit-text-stroke: 0.3px rgb(51, 51, 51); transform: scaleX(1.0582);">на YouTube</div>

<!-- popup -->
<div style="left:719px;top:88px;width:249px;height:98px;background:#fff;border:1px solid #d6d6d6;box-shadow:0 1px 4px rgba(0,0,0,.18)"></div>
<svg style="left:880px;top:185px;width:22px;height:8px" viewBox="0 0 22 8"><path d="M0 0 L11 7 L22 0" fill="#fff" stroke="#d6d6d6"></path><path d="M1 0 H21" stroke="#fff" stroke-width="2"></path></svg>
<div class="t g5" style="left: 738px; top: 106px; font-size: 12.2px; transform: scaleX(1.0107);">Хотите быть в курсе того, что наша</div>
<div class="t g5" style="left: 738px; top: 121px; font-size: 12.2px; transform: scaleX(1.0335);">команда предлагает пользователям</div>
<div class="t g5" style="left: 738px; top: 136px; font-size: 12.2px; transform: scaleX(1.0029);">из вашей страны? <span style="color:#2a70b8;text-decoration:underline">Обновите свой</span></div>
<div class="t g5" style="left: 738px; top: 151px; font-size: 12.2px; transform: scaleX(1.0215);"><span style="color:#2a70b8;text-decoration:underline">профиль</span>.</div>


<!-- ======= SCROLLBAR ======= -->
<div id="sb"></div>
<div id="sbthumb"></div>
<svg style="left:1011px;top:67px;width:9px;height:5px" viewBox="0 0 9 5"><path d="M0 5 L4.5 0 L9 5Z" fill="#505050"></path></svg>
<svg style="left:1011px;top:723px;width:9px;height:5px" viewBox="0 0 9 5"><path d="M0 0 L4.5 5 L9 0Z" fill="#505050"></path></svg>

<!-- ======= STATUS BUBBLE ======= -->
<div style="left:-2px;top:715px;width:342px;height:21px;background:#e8e8e8;border:1px solid #2a2a2a;border-top:2px solid #262626;border-bottom:0;border-radius:0 3px 0 0"></div>
<div class="t" style="left: 3px; top: 718px; font-size: 12px; color: rgb(94, 94, 94); transform: scaleX(0.9684);">www.youtube.com/channel/UCCebN7hxNntDF3kKf7T3tgg/about</div>

<!-- ======= TASKBAR ======= -->
<div id="taskbar"></div>
<div class="tb" style="left:3px;width:48px"></div>
<svg style="left:5px;top:743px;width:15.5px;height:15.5px" viewBox="-1 0 18 17"><path d="M1 3.5 C3 2.3 5 2.5 7.6 3.8 L6.6 8.6 C4.4 7.4 2.4 7.2 0.2 8.2Z" fill="#e8502a"></path><path d="M8.8 4.2 C11 5.2 13.4 5.2 16 3.8 L15 8.6 C12.6 9.9 10.2 9.8 7.8 8.8Z" fill="#6dbb3c"></path><path d="M0 9.6 C2.2 8.6 4.2 8.8 6.4 10 L5.4 14.8 C3.2 13.6 1.2 13.5 -1 14.6Z" fill="#3a7be0"></path><path d="M7.6 10.4 C10 11.4 12.4 11.3 14.8 10 L13.8 14.8 C11.4 16 9 16 6.6 15Z" fill="#f4c12c"></path></svg>
<div class="t tk" style="left: 23px; top: 744px; font-weight: bold; transform: scaleX(0.9636);">Пуск</div>
<div style="left:59px;top:741px;width:2px;height:21px;border-left:1px solid #9a9a9a;border-right:1px solid #fff"></div>
<svg style="left:68px;top:743px;width:20px;height:17px" viewBox="0 0 21 19"><rect x="1" y="1" width="19" height="14" rx="1" fill="#2d6fd8" stroke="#7aa6e8"></rect><path d="M2 13 L19 4 V14 H2Z" fill="#4f8ff0" opacity=".7"></path><rect x="3" y="16" width="15" height="2" fill="#8a9ab8"></rect></svg>
<svg style="left:96px;top:741px;width:21px;height:21px" viewBox="0 0 21 21"><circle cx="10.5" cy="10.5" r="10" fill="#e3423a"></circle><path d="M10.5 10.5 L1.8 5.5 A10 10 0 0 0 6 19.4Z" fill="#3aa757"></path><path d="M10.5 10.5 L6 19.4 A10 10 0 0 0 20.3 8.2 L10.5 8.2Z" fill="#f7c52b"></path><circle cx="10.5" cy="10.5" r="4.6" fill="#fff"></circle><circle cx="10.5" cy="10.5" r="3.6" fill="#4a8af4"></circle></svg>
<div style="left:126px;top:741px;width:2px;height:21px;border-left:1px solid #9a9a9a;border-right:1px solid #fff"></div>
<div class="tb on" style="left:134px;width:160px"></div>
<svg style="left:139px;top:743px;width:18px;height:18px" viewBox="0 0 21 21"><circle cx="10.5" cy="10.5" r="10" fill="#e3423a"></circle><path d="M10.5 10.5 L1.8 5.5 A10 10 0 0 0 6 19.4Z" fill="#3aa757"></path><path d="M10.5 10.5 L6 19.4 A10 10 0 0 0 20.3 8.2 L10.5 8.2Z" fill="#f7c52b"></path><circle cx="10.5" cy="10.5" r="4.6" fill="#fff"></circle><circle cx="10.5" cy="10.5" r="3.6" fill="#4a8af4"></circle></svg>
<div class="t tk" style="left: 161px; top: 745px; font-weight: bold; transform: scaleX(1);">7 Google Chrome</div>
<svg style="left:285px;top:751px;width:5.5px;height:3px" viewBox="0 0 7 4"><path d="M0 0 H7 L3.5 4Z" fill="#000"></path></svg>
<div class="tb" style="left:296px;width:160px"></div>
<svg style="left:300px;top:742px;width:20px;height:20px" viewBox="0 0 20 20"><rect x=".5" y=".5" width="19" height="19" rx="2" fill="#4a4a4a" stroke="#222"></rect><path d="M4 15 V9 C4 5 7 4 10 4 C13 4 16 5 16 9 V15Z" fill="#d8d8d8"></path><rect x="5" y="9" width="10" height="3" fill="#4a4a4a"></rect><rect x="8.5" y="10" width="3" height="1.2" fill="#d8d8d8"></rect></svg>
<div class="t tk" style="left: 324px; top: 744px; transform: scaleX(1.0254);">VipIP Серфинг &nbsp;v.7.18B...</div>
<div class="tb" style="left:460px;width:160px"></div>
<svg style="left:465px;top:742px;width:20px;height:20px" viewBox="0 0 20 20"><rect x="4" y="1" width="15" height="17" fill="#fff" stroke="#9ab"></rect><rect x="1" y="4" width="14" height="14" fill="#2f9a41" stroke="#17692a"></rect><path d="M4.5 7.5 L11.5 14.5 M11.5 7.5 L4.5 14.5" stroke="#fff" stroke-width="2.2"></path></svg>
<div class="t tk" style="left: 486px; top: 744px; transform: scaleX(1.0776);">2 Microsoft Office Excel</div>
<svg style="left:611px;top:751px;width:5.5px;height:3px" viewBox="0 0 7 4"><path d="M0 0 H7 L3.5 4Z" fill="#000"></path></svg>
<div class="tb" style="left:623px;width:159px"></div>
<svg style="left:627px;top:741px;width:20px;height:21px" viewBox="0 0 20 21"><path d="M5 1 H15 L19 5 V20 H5Z" fill="#fff" stroke="#8aa0c8"></path><rect x="1" y="4" width="13" height="12" fill="#2f62c4" stroke="#1c3f8a"></rect><path d="M3.5 7 L5.5 13 L7.5 8.5 L9.5 13 L11.5 7" fill="none" stroke="#fff" stroke-width="1.5"></path></svg>
<div class="t tk" style="left: 650px; top: 744px; transform: scaleX(1.0761);">букс.doc [Режим огра...</div>
<!-- tray -->
<div style="left:846px;top:739px;width:176px;height:26px;border:1px solid;border-color:#8c8c8c #fff #fff #8c8c8c"></div>
<svg style="left:848px;top:741px;width:21px;height:22px" viewBox="0 0 21 22"><rect x="6" y="1" width="11" height="9" fill="#3a4f8c" stroke="#202c58"></rect><rect x="1" y="7" width="11" height="9" fill="#4a63ac" stroke="#202c58"></rect><rect x="2.5" y="8.5" width="8" height="5" fill="#1a2450"></rect><path d="M11 12 L19 20 M19 12 L11 20" stroke="#e81c1c" stroke-width="3"></path></svg>
<svg style="left:870px;top:741px;width:21px;height:22px" viewBox="0 0 21 22"><rect x="6" y="1" width="11" height="9" fill="#3a4f8c" stroke="#202c58"></rect><rect x="1" y="7" width="11" height="9" fill="#4a63ac" stroke="#202c58"></rect><rect x="2.5" y="8.5" width="8" height="5" fill="#1a2450"></rect><path d="M11 12 L19 20 M19 12 L11 20" stroke="#e81c1c" stroke-width="3"></path></svg>
<svg style="left:892px;top:741px;width:20px;height:22px" viewBox="0 0 20 22"><rect x="7" y="1" width="11" height="9" fill="#8cc0f0" stroke="#4a82c8"></rect><rect x="1" y="8" width="11" height="9" fill="#6aa8ec" stroke="#3a6cb8"></rect><rect x="2.5" y="9.5" width="8" height="5" fill="#b8dcff"></rect><rect x="3" y="18" width="8" height="2" fill="#7aa0d0"></rect></svg>
<svg style="left:915px;top:741px;width:22px;height:22px" viewBox="0 0 22 22"><rect x="1" y="2" width="13" height="11" fill="#c8c8c8" stroke="#9a9a9a"></rect><path d="M13 8 L21 21 H5Z" fill="#f8cc1c" stroke="#8a6a00" stroke-width="1"></path><path d="M13 12.5 V17" stroke="#222" stroke-width="2"></path><circle cx="13" cy="19" r="1" fill="#222"></circle></svg>
<svg style="left:938px;top:741px;width:22px;height:22px" viewBox="0 0 22 22"><circle cx="9" cy="9" r="8" fill="#8a8a8a" stroke="#4a4a4a"></circle><circle cx="9" cy="9" r="4.5" fill="#c4c4c4" stroke="#5a5a5a"></circle><circle cx="9" cy="9" r="1.8" fill="#3a3a3a"></circle><path d="M14 14 C17 15 19 17 20 20" fill="none" stroke="#a8a8d8" stroke-width="2"></path></svg>
<svg style="left:961px;top:741px;width:20px;height:22px" viewBox="0 0 20 22"><path d="M2 8 H6 L12 2 V20 L6 14 H2Z" fill="#e87848" stroke="#8a3414"></path><path d="M14 5 C16 8 16 14 14 17" fill="none" stroke="#6a2810" stroke-width="1.6"></path><path d="M17 3 C20 8 20 14 17 19" fill="none" stroke="#6a2810" stroke-width="1.6"></path></svg>
<div class="t tk" style="left: 987px; top: 744px; transform: scaleX(0.9988);">13:02</div>


<!--TASKBAR-->

</div>


</body></html>
